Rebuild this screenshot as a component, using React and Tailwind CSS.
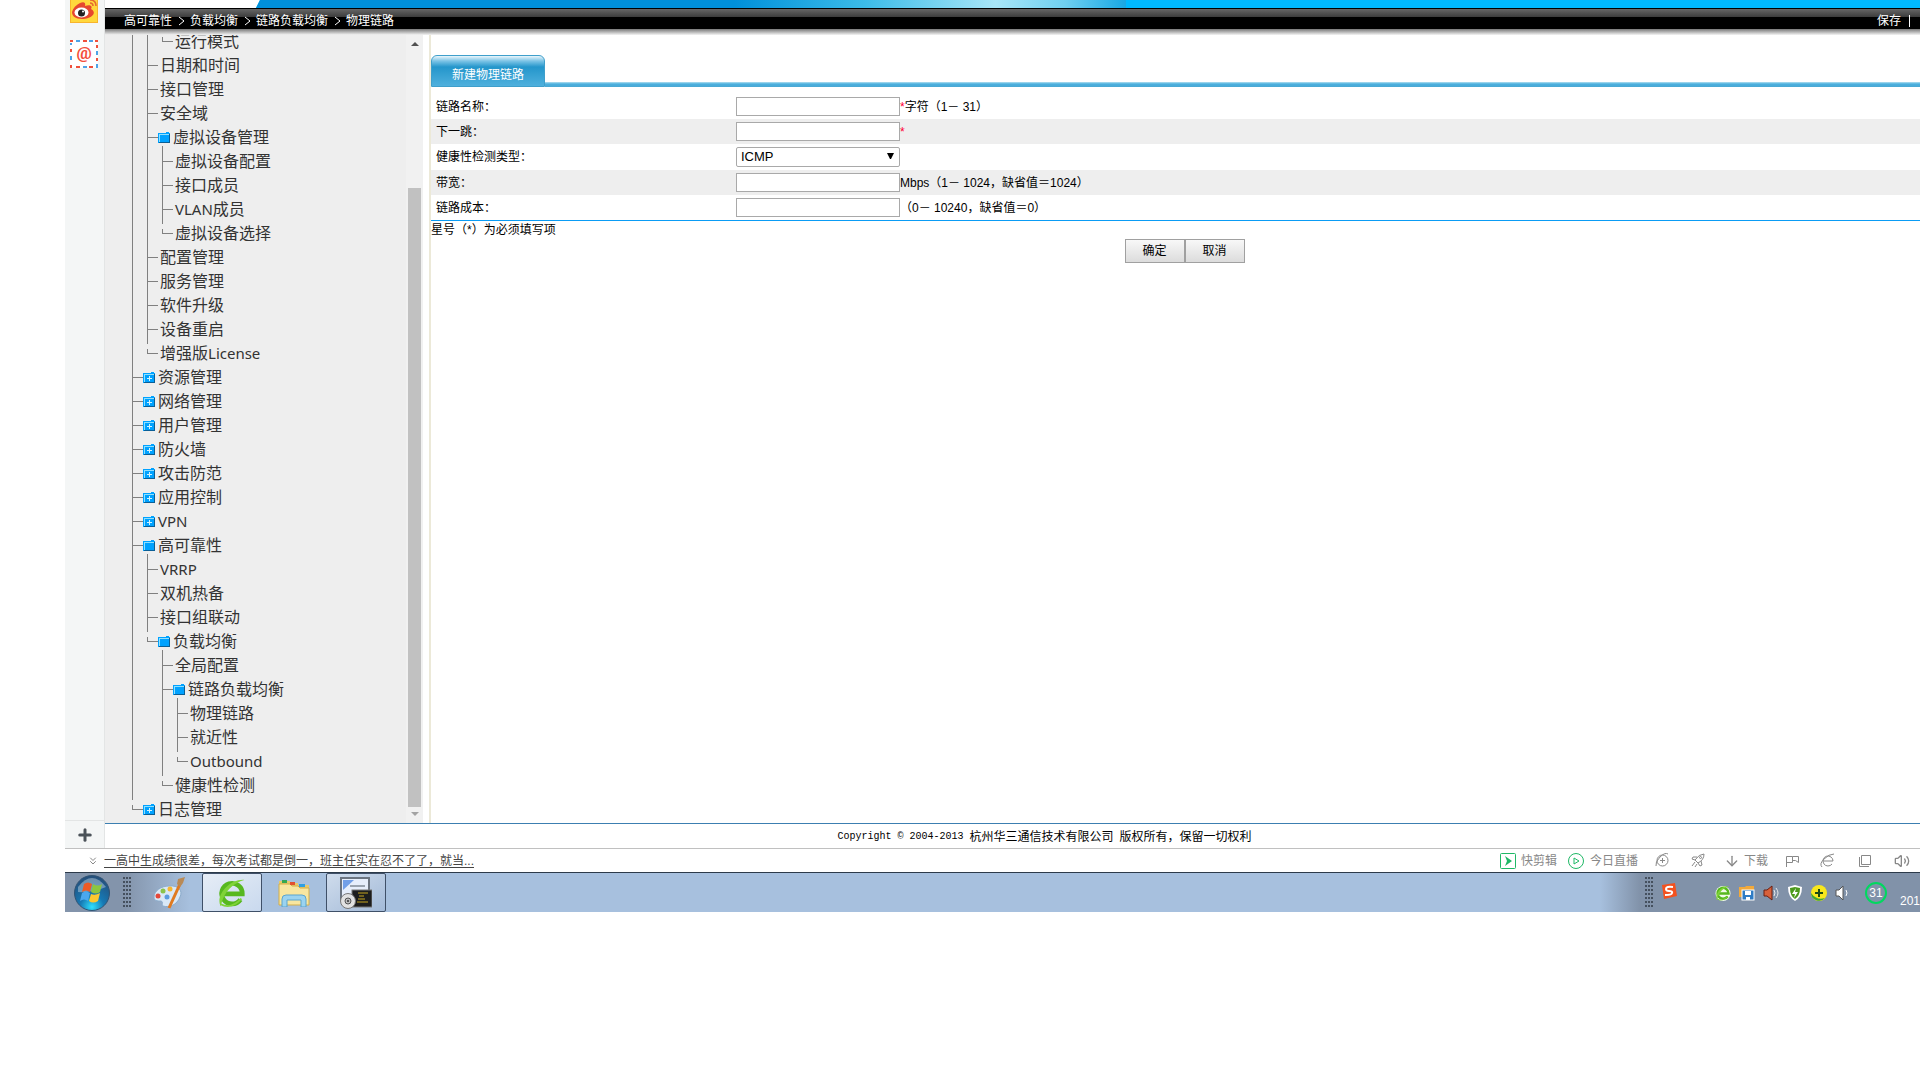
import { ChevronsDown, Plus, ArrowDown, Volume2 } from 'lucide-react'

// guides: one entry per ancestor level, 1 draws its vertical line
const NAV = [
  { guides: [1, 1], last: true, label: '运行模式' },
  { guides: [1], label: '日期和时间' },
  { guides: [1], label: '接口管理' },
  { guides: [1], label: '安全域' },
  { guides: [1], label: '虚拟设备管理', folder: 'open' },
  { guides: [1, 1], label: '虚拟设备配置' },
  { guides: [1, 1], label: '接口成员' },
  { guides: [1, 1], latin: 'VLAN', label: '成员' },
  { guides: [1, 1], last: true, label: '虚拟设备选择' },
  { guides: [1], label: '配置管理' },
  { guides: [1], label: '服务管理' },
  { guides: [1], label: '软件升级' },
  { guides: [1], label: '设备重启' },
  { guides: [1], last: true, label: '增强版', latinEnd: 'License' },
  { guides: [], label: '资源管理', folder: 'closed' },
  { guides: [], label: '网络管理', folder: 'closed' },
  { guides: [], label: '用户管理', folder: 'closed' },
  { guides: [], label: '防火墙', folder: 'closed' },
  { guides: [], label: '攻击防范', folder: 'closed' },
  { guides: [], label: '应用控制', folder: 'closed' },
  { guides: [], latin: 'VPN', folder: 'closed' },
  { guides: [], label: '高可靠性', folder: 'open' },
  { guides: [1], latin: 'VRRP' },
  { guides: [1], label: '双机热备' },
  { guides: [1], label: '接口组联动' },
  { guides: [1], last: true, label: '负载均衡', folder: 'open' },
  { guides: [1, 0], label: '全局配置' },
  { guides: [1, 0], label: '链路负载均衡', folder: 'open' },
  { guides: [1, 0, 1], label: '物理链路' },
  { guides: [1, 0, 1], label: '就近性' },
  { guides: [1, 0, 1], last: true, latin: 'Outbound' },
  { guides: [1, 0], last: true, label: '健康性检测' },
  { guides: [], last: true, label: '日志管理', folder: 'closed' },
]

const CRUMBS = ['高可靠性', '负载均衡', '链路负载均衡', '物理链路']

function FolderIcon({ closed }) {
  return (
    <svg className="w-3 h-[11px] mt-[10px] mr-[3px] shrink-0" viewBox="0 0 12 11" shapeRendering="crispEdges">
      <path d="M0 1H8V0H11V1H12V11H0Z" fill="#00a2ff" />
      <path d="M1 10V2H11V3H2V10Z" fill="#8fe0ff" />
      <path d="M11 2H12V11H1V10H11Z" fill="#0b5f96" />
      {closed && <path d="M6 4H7V6H9V7H7V9H6V7H4V6H6Z" fill="#d5f4ff" />}
    </svg>
  )
}

function Connector({ last }) {
  return (
    <svg className="w-[11px] h-6 shrink-0" viewBox="0 0 11 24" shapeRendering="crispEdges">
      <path d={last ? 'M0 0H1V6H0ZM0 11H1V15H11V16H0Z' : 'M0 0H1V15H11V16H1V24H0Z'} fill="#808080" />
    </svg>
  )
}

function Latin({ children }) {
  return <span className="font-['Noto_Sans',sans-serif] text-[15px] leading-none">{children}</span>
}

function TreeRow({ item }) {
  return (
    <li className="flex h-6">
      {item.guides.map((on, i) => (
        <span key={i} className={`w-[15px] h-6 shrink-0 ${on ? 'border-l border-[#808080]' : ''}`} />
      ))}
      <Connector last={item.last} />
      {item.folder && <FolderIcon closed={item.folder === 'closed'} />}
      <a href="#" className={`pt-1 leading-6 whitespace-nowrap text-[#333] ${item.folder ? '' : 'pl-[2px]'}`}>
        {item.latin && <Latin>{item.latin}</Latin>}
        {item.label}
        {item.latinEnd && <Latin>{item.latinEnd}</Latin>}
      </a>
    </li>
  )
}

function Field({ id, label, shaded, children }) {
  return (
    <tr className={shaded ? 'bg-[#eee]' : ''}>
      <th scope="row" className="w-[305px] p-0 pl-[5px] text-left font-normal">
        <label htmlFor={id}>{label}：</label>
      </th>
      <td className="p-0">
        <div className="flex items-center py-[3px]">{children}</div>
      </td>
    </tr>
  )
}

function TextBox({ id }) {
  return <input id={id} type="text" className="w-[164px] h-[19px] px-1 bg-white border border-[#a9a9a9] outline-none" />
}

function WeiboIcon() {
  return (
    <svg className="w-7 h-[23px]" viewBox="0 0 28 23">
      <rect x="0.5" y="-5" width="27" height="27.5" fill="#ffd83c" stroke="#f8b42c" />
      <path d="M10 3C14 1 16 3 15 6C20 4 23 6 21 9C28 13 21 19 12 19C5 19 2 16 2 12C3 8 6 5 10 3Z" fill="#e6472f" />
      <ellipse cx="11.500" cy="12.500" rx="7" ry="5" fill="#fff" />
      <circle cx="11.500" cy="13" r="3.500" fill="#222" />
      <circle cx="13" cy="11.500" r="1" fill="#fff" />
      <path d="M20 3Q23 3 23 6M20 0Q26 0 26 6" fill="none" stroke="#e66a2f" strokeWidth="1.500" />
    </svg>
  )
}

function MailIcon() {
  return (
    <svg className="w-7 h-7" viewBox="0 0 28 28">
      <rect width="28" height="28" fill="#fff" />
      <path d="M0 1H3M13 1H17M25 1H28M6 27H10M19 27H23M1 9V12M27 5V8M27 18V21M1 25V28" stroke="#f0503c" strokeWidth="2" />
      <path d="M6 1H10M19 1H23M13 27H17M26 27H28M1 3V5M1 16V20M27 11V15M27 24V26" stroke="#4da3e8" strokeWidth="2" />
      <text x="14" y="19" textAnchor="middle" fontSize="17" fontWeight="700" fill="#f4503c" fontFamily="Roboto, sans-serif">@</text>
    </svg>
  )
}

function StartOrb() {
  return (
    <svg className="w-9 h-9" viewBox="0 0 36 36">
      <defs>
        <radialGradient id="orb" cx="50%" cy="90%" r="85%">
          <stop offset="0" stopColor="#2fe0ff" />
          <stop offset="0.400" stopColor="#1679b4" />
          <stop offset="1" stopColor="#24507c" />
        </radialGradient>
      </defs>
      <circle cx="18" cy="18" r="17.500" fill="url(#orb)" stroke="#315374" />
      <path d="M4 12Q18 -6 32 12Q18 18 4 17Z" fill="#fff" opacity="0.350" />
      <path d="M10 9Q14 6 18 9L16 17Q12 14 8 17Z" fill="#ee5a24" />
      <path d="M19 9Q24 12 28 9L26 17Q22 20 17 17Z" fill="#8cc63f" />
      <path d="M8 18Q12 15 16 18L14 26Q10 23 6 26Z" fill="#4aa8ee" />
      <path d="M17 19Q21 21 26 18L24 26Q19 29 15 26Z" fill="#fdc72f" />
    </svg>
  )
}

function Grip() {
  return (
    <svg className="w-2 h-8 shrink-0" viewBox="0 0 8 32" shapeRendering="crispEdges">
      {[0, 4, 8, 12, 16, 20, 24, 28].map((y) => (
        <path key={y} d={`M0 ${y}h2v2h-2zM3 ${y}h2v2h-2zM6 ${y}h2v2h-2z`} fill="#45505e" />
      ))}
    </svg>
  )
}

function PaintIcon() {
  return (
    <svg className="w-8 h-8" viewBox="0 0 32 32">
      <path d="M16 9C26 8 30 14 27 20C24 28 16 31 10 29C8 28 11 25 8 24C4 24 1 24 1 20C1 14 8 9 16 9Z" fill="#d9e8f6" stroke="#8caccc" />
      <circle cx="5" cy="19" r="2.500" fill="#e4483a" />
      <circle cx="10" cy="14" r="2.500" fill="#8bc34a" />
      <circle cx="17" cy="12" r="2.500" fill="#f6b733" />
      <circle cx="14" cy="20" r="2.500" fill="#5b9be0" />
      <path d="M27 7L16 31" stroke="#e07a20" strokeWidth="3" />
      <path d="M24 7L25 2L32 0L30 6L27 10Z" fill="#b98a56" />
    </svg>
  )
}

function BrowserIcon({ className, disc }) {
  return (
    <svg className={className} viewBox="0 0 32 32" fill="none">
      {disc && <circle cx="16" cy="17" r="15" fill="#f2fbea" />}
      <path d="M6 17H27A11 11 0 1 0 25 23" stroke="#57b81f" strokeWidth="5" />
      <path d="M4 30C-2 20 12 1 29 2C18 5 7 14 4 30Z" fill="#7fd338" />
      <path d="M4 28Q15 34 26 22" stroke="#7fd338" strokeWidth="2" />
    </svg>
  )
}

function ExplorerIcon() {
  return (
    <svg className="w-8 h-7" viewBox="0 0 32 28">
      <path d="M1 2H12V4H20V6H31V26H1Z" fill="#e8c96a" />
      <path d="M1 5H12L14 7H20L22 9H31V26H1Z" fill="#f8e6a0" stroke="#d3ae4b" />
      <path d="M4 1H9V4H4Z" fill="#34a853" />
      <path d="M12 3H17V6H12Z" fill="#e2502f" />
      <path d="M21 5H27V8H21Z" fill="#2f9fe2" />
      <path d="M4 28V20Q4 16 8 16H24Q28 16 28 20V28H23V21H9V28Z" fill="#9bd3f0" stroke="#5aa5cf" />
    </svg>
  )
}

function TerminalIcon() {
  return (
    <svg className="w-8 h-8" viewBox="0 0 32 32">
      <rect x="1" y="1" width="28" height="22" fill="#e6eefb" stroke="#6b7480" strokeWidth="2" />
      <path d="M3 3H14L3 13Z" fill="#3e7de0" opacity="0.700" />
      <path d="M10 9H25" stroke="#9aa4b0" strokeWidth="2" />
      <rect x="12" y="13" width="20" height="17" fill="#1d1d1d" stroke="#777" />
      <path d="M18 16H28M19 19H24M18 22H25M17 25H28" stroke="#c5a520" />
      <circle cx="8" cy="24" r="7.500" fill="#e2e2e2" stroke="#777" />
      <circle cx="8" cy="24" r="3" fill="#bbb" stroke="#555" />
      <circle cx="8" cy="24" r="1" fill="#333" />
    </svg>
  )
}

function BrowserSidebar() {
  return (
    <aside className="flex flex-col w-10 shrink-0 bg-[#f4f6f6] border-r border-[#e3e5e5]">
      <a href="#" aria-label="微博" className="ml-[5px]"><WeiboIcon /></a>
      <a href="#" aria-label="邮箱" className="ml-[5px] mt-[17px]"><MailIcon /></a>
      <button type="button" aria-label="添加" className="flex items-center justify-center h-7 mt-auto border-t border-[#e3e5e5]">
        <Plus className="w-[18px] h-[18px] text-[#4b5259]" strokeWidth={4} />
      </button>
    </aside>
  )
}

function TopBar() {
  return (
    <header>
      <div className="h-2 bg-[#00b9ff] overflow-hidden">
        <svg className="block h-2 w-[1021px]" viewBox="0 0 1021 8">
          <defs>
            <linearGradient id="sky">
              <stop offset="0" stopColor="#0090da" />
              <stop offset="0.550" stopColor="#0090da" />
              <stop offset="0.700" stopColor="#3cbce8" />
              <stop offset="0.850" stopColor="#a8e6f8" />
              <stop offset="0.930" stopColor="#6fd0f0" />
              <stop offset="1" stopColor="#18a8e4" />
            </linearGradient>
          </defs>
          <path d="M0 0H155L151 8H0Z" fill="#fff" />
          <path d="M155 0H1021V8H151Z" fill="url(#sky)" />
        </svg>
      </div>
      <div className="flex items-center h-[21px] pl-[19px] pt-1 border-t border-black bg-[linear-gradient(#666,#3c3c3c_8px,#000_8px)] text-white text-xs">
        <nav className="flex items-center">
          {CRUMBS.map((crumb, i) => (
            <span key={crumb} className="flex items-center">
              {i > 0 && (
                <svg className="w-[18px] h-3" viewBox="0 0 18 12"><path d="M7 2L12 6L7 10" fill="none" stroke="#fff" /></svg>
              )}
              <a href="#">{crumb}</a>
            </span>
          ))}
        </nav>
        <div className="flex items-center gap-2 ml-auto pr-[10px]">
          <a href="#">保存</a>
          <span className="w-px h-3 bg-white" />
        </div>
      </div>
      <div className="h-[6px] bg-[linear-gradient(#777,#f4f4f4)]" />
    </header>
  )
}

function NavTree() {
  return (
    <div className="flex w-[318px] shrink-0 bg-[#eee] overflow-hidden">
      <ul className="flex-1 pl-[27px] -mt-[9px] text-base">
        {NAV.map((item, i) => <TreeRow key={i} item={item} />)}
      </ul>
      <div className="flex flex-col items-center w-[17px] bg-[#f1f1f1]">
        <svg className="w-2 h-4 shrink-0" viewBox="0 0 8 16"><path d="M0 11L4 7L8 11Z" fill="#505050" /></svg>
        <div className="w-[13px] mt-[137px] flex-1 bg-[#c1c1c1]" />
        <svg className="w-2 h-4 shrink-0" viewBox="0 0 8 16"><path d="M0 5H8L4 9Z" fill="#a3a3a3" /></svg>
      </div>
    </div>
  )
}

function LinkForm() {
  return (
    <main className="flex-1 ml-[6px] border-l-2 border-[#ece9d8] pt-5 text-xs">
      <div className="flex items-end">
        <button type="button" className="w-[114px] h-8 pt-2 rounded-t-md border border-[#3f9fcb] bg-[linear-gradient(#eaf6fc,#7cc4e6_5px,#2496cb_11px,#4fb0dd)] text-white">新建物理链路</button>
        <div className="flex-1 h-[5px] bg-[linear-gradient(#b5dff0,#4bb0de_2px,#4aa8d4)]" />
      </div>
      <form onSubmit={(e) => e.preventDefault()}>
        <table className="w-full mt-[7px]">
          <tbody>
            <Field id="name" label="链路名称">
              <TextBox id="name" /><span className="text-[#ff0033]">*</span>字符（1－ 31）
            </Field>
            <Field id="nexthop" label="下一跳" shaded>
              <TextBox id="nexthop" /><span className="text-[#ff0033]">*</span>
            </Field>
            <Field id="probe" label="健康性检测类型">
              <div className="relative">
                <select id="probe" className="block w-[164px] h-5 pl-1 appearance-none bg-white border border-[#a9a9a9] rounded-xs text-[13px] leading-4">
                  <option>ICMP</option>
                </select>
                <svg className="absolute right-[6px] top-[6px] w-[7px] h-[6px] pointer-events-none" viewBox="0 0 7 6"><path d="M0 0H7L4 6H3Z" /></svg>
              </div>
            </Field>
            <Field id="bandwidth" label="带宽" shaded>
              <TextBox id="bandwidth" />Mbps（1－ 1024，缺省值＝1024）
            </Field>
            <Field id="cost" label="链路成本">
              <TextBox id="cost" />（0－ 10240，缺省值＝0）
            </Field>
          </tbody>
        </table>
        <p className="pt-px border-t border-[#0a9cf5]">星号（*）为必须填写项</p>
        <div className="flex justify-center pl-[18px] mt-px">
          <button type="submit" className="w-[60px] h-6 border border-[#a0a0a0] bg-linear-to-b from-[#f8f8f8] to-[#dcdcdc]">确定</button>
          <button type="button" className="w-[60px] h-6 border border-[#a0a0a0] bg-linear-to-b from-[#f8f8f8] to-[#dcdcdc]">取消</button>
        </div>
      </form>
    </main>
  )
}

function StatusBar() {
  return (
    <div className="flex items-center h-[24px] border-t border-[#c0c0c0] pl-[22px] text-xs text-[#888]">
      <ChevronsDown className="w-3 h-3 mr-[5px]" strokeWidth={2} />
      <a href="#" className="text-[#444] underline underline-offset-2">一高中生成绩很差，每次考试都是倒一，班主任实在忍不了了，就当...</a>
      <div className="flex items-center ml-auto pr-[10px]">
        <button type="button" className="flex items-center gap-[5px] w-[68px]">
          <svg className="w-4 h-4" viewBox="0 0 16 16"><rect x="0.500" y="0.500" width="15" height="15" rx="1" fill="none" stroke="#1fb866" /><path d="M5 3L12 8L5 13L7 8Z" fill="#1fb866" /></svg>
          快剪辑
        </button>
        <button type="button" className="flex items-center gap-[6px] w-[87px]">
          <svg className="w-4 h-4" viewBox="0 0 16 16" fill="none" stroke="#1fb866"><circle cx="8" cy="8" r="7.500" /><path d="M6 5L11 8L6 11Z" /></svg>
          今日直播
        </button>
        <button type="button" aria-label="加速" className="w-9">
          <svg className="w-[15px] h-[15px]" viewBox="0 0 15 15" fill="none" stroke="#888"><circle cx="7.500" cy="7.500" r="5.500" /><path d="M7.500 5V10M5 7.500H10M1 13Q0 9 5 4T13 1" /></svg>
        </button>
        <button type="button" aria-label="火箭" className="w-[33px]">
          <svg className="w-[15px] h-[15px]" viewBox="0 0 15 15" fill="none" stroke="#888"><path d="M13 1Q8 1 4 7L7 10Q13 7 13 1ZM6 4H2L1 6L4 7M10 8L11 12L9 13L7 10M4 9L1 13M6 11L4 14" /><circle cx="9.500" cy="4.500" r="1" /></svg>
        </button>
        <button type="button" className="flex items-center gap-1 w-[61px]"><ArrowDown className="w-4 h-4" strokeWidth={2} />下载</button>
        <button type="button" aria-label="标记" className="w-[35px]">
          <svg className="w-[14px] h-[14px]" viewBox="0 0 14 14" fill="none" stroke="#888"><path d="M1.500 13V2.500H7.500V8.500H1.500M7.500 2.500H13.500V8.500L10.500 6.500H7.500" /></svg>
        </button>
        <button type="button" aria-label="内核" className="w-[38px]">
          <svg className="w-[15px] h-[15px]" viewBox="0 0 15 15" fill="none" stroke="#888"><path d="M3 8H13A5 5 0 1 0 12 11M2 14Q-1 11 4 6T14 1" /></svg>
        </button>
        <button type="button" aria-label="窗口" className="w-9">
          <svg className="w-[14px] h-[14px]" viewBox="0 0 14 14" fill="none" stroke="#888"><path d="M3.500 1.500H12.500V10.500H3.500ZM1.500 3V12.500H11" /></svg>
        </button>
        <button type="button" aria-label="声音"><Volume2 className="w-4 h-4" strokeWidth={2} /></button>
      </div>
    </div>
  )
}

function Taskbar() {
  return (
    <div className="flex items-center h-10 border-t border-[#2c3a4a] bg-[linear-gradient(90deg,#8394ab,#8394ab_60px,#a7c0de_125px,#a7c0de_calc(100%-320px),#8192a9_calc(100%-280px))]">
      <button type="button" aria-label="开始" className="ml-[9px]"><StartOrb /></button>
      <div className="ml-[13px]"><Grip /></div>
      <button type="button" aria-label="画图" className="ml-[22px]"><PaintIcon /></button>
      <button type="button" aria-label="浏览器" className="flex items-center justify-center w-[60px] h-[39px] ml-[17px] rounded-xs border border-[#3f5068] bg-linear-to-br from-[#e6edf6] to-[#c9d9ee]">
        <BrowserIcon className="w-[30px] h-[30px]" />
      </button>
      <button type="button" aria-label="资源管理器" className="ml-[16px]"><ExplorerIcon /></button>
      <button type="button" aria-label="终端" className="flex items-center justify-center w-[60px] h-[39px] ml-[16px] rounded-xs border border-[#3f5068] bg-linear-to-br from-[#cfdcec] to-[#a3bad8]">
        <TerminalIcon />
      </button>
      <div className="flex items-center ml-auto">
        <Grip />
        <svg className="w-4 h-4 ml-2 mb-1" viewBox="0 0 16 16"><path d="M1 2L14 0L16 13L3 16Z" fill="#f4511e" /><path d="M12 4Q5 3 5 6Q5 8 8 8Q12 8 11 10Q11 12 4 12" fill="none" stroke="#fff" strokeWidth="2" /></svg>
        <div className="flex items-center gap-2 ml-[38px]">
          <BrowserIcon className="w-4 h-4" disc />
          <svg className="w-4 h-4" viewBox="0 0 16 16"><path d="M0 2H6L7 1H15V12H0Z" fill="#f2a93b" /><rect x="3" y="5" width="12" height="10" fill="#2f7cc4" stroke="#fff" /><rect x="6" y="6" width="6" height="4" fill="#fff" /><rect x="7" y="12" width="4" height="3" fill="#fff" /></svg>
          <svg className="w-4 h-4" viewBox="0 0 16 16"><path d="M1 5H4L9 1V15L4 11H1Z" fill="#d8603a" stroke="#6b1f10" /><path d="M11 5Q13 8 11 11M13 3Q17 8 13 13" fill="none" stroke="#e9e9e9" /></svg>
          <svg className="w-4 h-4" viewBox="0 0 16 16"><path d="M8 0L15 2Q15 12 8 16Q1 12 1 2Z" fill="#fff" /><path d="M8 2L13 3Q13 11 8 14Q3 11 3 3Z" fill="#4c9a1c" /><path d="M9 3L5 9H8L7 13L11 7H8Z" fill="#fff" /></svg>
          <svg className="w-4 h-4" viewBox="0 0 16 16"><circle cx="8" cy="8" r="8" fill="#f8e71c" /><path d="M0 8A8 8 0 0 0 14 13Q6 16 0 8Z" fill="#3da53a" /><path d="M7 4H9V7H12V9H9V12H7V9H4V7H7Z" fill="#1c4a12" /></svg>
          <svg className="w-4 h-4" viewBox="0 0 16 16"><path d="M1 5H4L8 1V15L4 11H1Z" fill="#fff" stroke="#555" /><path d="M11 5Q13 8 11 11" fill="none" stroke="#fff" /></svg>
        </div>
        <div className="flex items-center justify-center w-[22px] h-[22px] ml-[14px] rounded-full border-2 border-[#00d95f] text-white text-xs">31</div>
        <span className="self-end ml-[13px] pt-[16px] text-white text-xs">201</span>
      </div>
    </div>
  )
}

export default function App() {
  return (
    <div className="ml-[65px] bg-white text-black overflow-hidden font-['Liberation_Sans','Noto_Sans_CJK_SC',sans-serif]">
      <div className="flex">
        <BrowserSidebar />
        <div className="flex flex-col flex-1 min-w-0">
          <TopBar />
          <div className="flex h-[788px]">
            <NavTree />
            <LinkForm />
          </div>
          <footer className="flex items-center justify-center gap-[6px] h-[25px] pl-16 pt-[2px] border-t border-[#3c7fb1] text-xs">
            <span className="font-['Liberation_Mono',monospace] text-[10px]">Copyright © 2004-2013</span>
            <span>杭州华三通信技术有限公司</span>
            <span>版权所有，保留一切权利</span>
          </footer>
        </div>
      </div>
      <StatusBar />
      <Taskbar />
    </div>
  )
}
